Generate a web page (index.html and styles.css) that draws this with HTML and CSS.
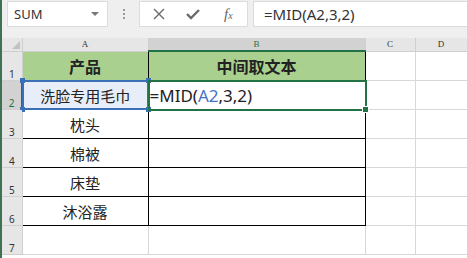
FILE: index.html
```html
<!DOCTYPE html>
<html lang="zh">
<head>
    <meta charset="UTF-8">
    <title>MID</title>
    <link rel="stylesheet" href="styles.css">
</head>
<body>
    <div class="app">
        <div class="toolbar">
            <div class="namebox">
                <span>SUM</span>
                <span class="caret"></span>
            </div>
            <div class="dots"><i></i><i></i><i></i></div>
            <div class="fbtns">
                <svg class="ico" width="14" height="14" viewBox="0 0 14 14">
                    <path d="M2 2 L12 12 M12 2 L2 12" stroke="#6a6a6a" stroke-width="1.4" fill="none"/>
                </svg>
                <svg class="ico" width="16" height="14" viewBox="0 0 16 14">
                    <path d="M2 7 L6 11 L14 3" stroke="#6a6a6a" stroke-width="2.4" fill="none"/>
                </svg>
                <span class="fx">f<small>x</small></span>
            </div>
            <div class="finput">=MID(A2,3,2)</div>
        </div>

        <table class="sheet">
            <colgroup>
                <col class="c-rh">
                <col class="c-a">
                <col class="c-b">
                <col class="c-c">
                <col class="c-d">
            </colgroup>
            <tr class="colhead">
                <td class="corner"><span class="tri"></span></td>
                <td>A</td>
                <td class="sel">B</td>
                <td>C</td>
                <td>D</td>
            </tr>
            <tr>
                <td class="rh">1</td>
                <td class="t head">产品</td>
                <td class="t head">中间取文本</td>
                <td></td><td></td>
            </tr>
            <tr>
                <td class="rh active">2</td>
                <td class="t ref">洗脸专用毛巾
                    <span class="refbox"><b class="h tl"></b><b class="h tr"></b><b class="h bl"></b><b class="h br"></b></span>
                </td>
                <td class="t edit">=MID(<span class="blue">A2</span>,3,2)
                    <span class="editbox"><b class="fill"></b></span>
                </td>
                <td></td><td></td>
            </tr>
            <tr><td class="rh">3</td><td class="t">枕头</td><td class="t"></td><td></td><td></td></tr>
            <tr><td class="rh">4</td><td class="t">棉被</td><td class="t"></td><td></td><td></td></tr>
            <tr><td class="rh">5</td><td class="t">床垫</td><td class="t"></td><td></td><td></td></tr>
            <tr><td class="rh">6</td><td class="t">沐浴露</td><td class="t"></td><td></td><td></td></tr>
            <tr><td class="rh">7</td><td></td><td></td><td></td><td></td></tr>
        </table>
    </div>
</body>
</html>
```

FILE: styles.css
```css
body {
    margin: 0;
    background: #fff;
    font-family: "Noto Sans", "Noto Sans CJK SC", sans-serif;
    overflow: hidden;
}
.app {
    border-left: 2px solid #3d7350;
    height: 258px;
}
.toolbar {
    display: flex;
    align-items: flex-start;
    height: 38px;
    padding-top: 1px;
    box-sizing: border-box;
    background: #efefef;
}
.namebox {
    margin-left: 5px;
    width: 101px;
    height: 26px;
    background: #fff;
    box-sizing: border-box;
    border: 1px solid #dcdcdc;
    display: flex;
    align-items: center;
    justify-content: space-between;
    padding: 0 8px 0 6px;
    font-size: 13px;
    color: #333;
}
.caret {
    width: 0;
    height: 0;
    border-left: 4px solid transparent;
    border-right: 4px solid transparent;
    border-top: 4px solid #777;
}
.dots {
    width: 31px;
    height: 26px;
    display: flex;
    flex-direction: column;
    align-items: center;
    justify-content: center;
    gap: 2px;
}
.dots i {
    width: 2px;
    height: 2px;
    background: #999;
}
.fbtns {
    width: 109px;
    height: 26px;
    background: #fff;
    box-sizing: border-box;
    border: 1px solid #dcdcdc;
    display: flex;
    align-items: center;
    padding-left: 12px;
    gap: 19px;
}
.fx {
    font-family: "Liberation Serif", serif;
    font-style: italic;
    font-size: 15px;
    color: #666;
    margin-left: 4px;
}
.fx small {
    font-size: 10px;
}
.finput {
    margin-left: 5px;
    flex: 1;
    height: 26px;
    background: #fff;
    box-sizing: border-box;
    border: 1px solid #dcdcdc;
    border-right: none;
    padding-left: 10px;
    line-height: 24px;
    font-size: 15px;
    color: #333;
}

.sheet {
    border-collapse: collapse;
    table-layout: fixed;
    width: 465px;
}
.c-rh { width: 20px; }
.c-a { width: 126px; }
.c-b { width: 217px; }
.c-c { width: 50px; }
.c-d { width: 52px; }

.sheet td {
    border: 1px solid #d8d8d8;
    height: 28px;
    padding: 0;
    text-align: center;
    font-size: 15px;
    color: #222;
    position: relative;
}
.sheet tr:first-child td {
    border-top: none;
}
.sheet tr td:first-child {
    border-left: none;
}
.colhead td {
    height: 11px;
    background: #e6e6e6;
    border-color: #cfcfcf;
    font-family: "Liberation Serif", serif;
    font-size: 9px;
    line-height: 12px;
    color: #333;
}
.colhead td.sel {
    background: #d2d2d2;
    border-bottom: 2px solid #217346;
    color: #217346;
}
.corner .tri {
    position: absolute;
    right: 2px;
    bottom: 2px;
    width: 0;
    height: 0;
    border-left: 8px solid transparent;
    border-bottom: 8px solid #c2c2c2;
}
.sheet td.rh {
    background: #e6e6e6;
    border-color: #cfcfcf;
    font-size: 10px;
    vertical-align: bottom;
    color: #333;
    line-height: 12px;
}
.sheet td.rh.active {
    background: #d2d2d2;
    border-right: 2px solid #217346;
    color: #217346;
}
.sheet td.t {
    border: 1px solid #000;
}
.sheet td.head {
    background: #a9d08e;
    font-weight: bold;
    font-size: 16px;
}
.sheet td.ref {
    background: #e8eef9;
}
.sheet td.edit {
    text-align: left;
    padding-left: 1px;
    font-size: 17px;
}
.blue {
    color: #4472c4;
}
.refbox {
    position: absolute;
    inset: -1px;
    border: 2px solid #3b6fb6;
}
.refbox .h {
    position: absolute;
    width: 5px;
    height: 5px;
    background: #3b6fb6;
}
.refbox .tl { left: -4px; top: -4px; }
.refbox .tr { right: -4px; top: -4px; }
.refbox .bl { left: -4px; bottom: -4px; }
.refbox .br { right: -4px; bottom: -4px; }
.editbox {
    position: absolute;
    inset: -1px -2px -2px -1px;
    border: 2px solid #217346;
}
.editbox .fill {
    position: absolute;
    right: -4px;
    bottom: -4px;
    width: 5px;
    height: 5px;
    background: #217346;
    border: 1px solid #fff;
}
```
